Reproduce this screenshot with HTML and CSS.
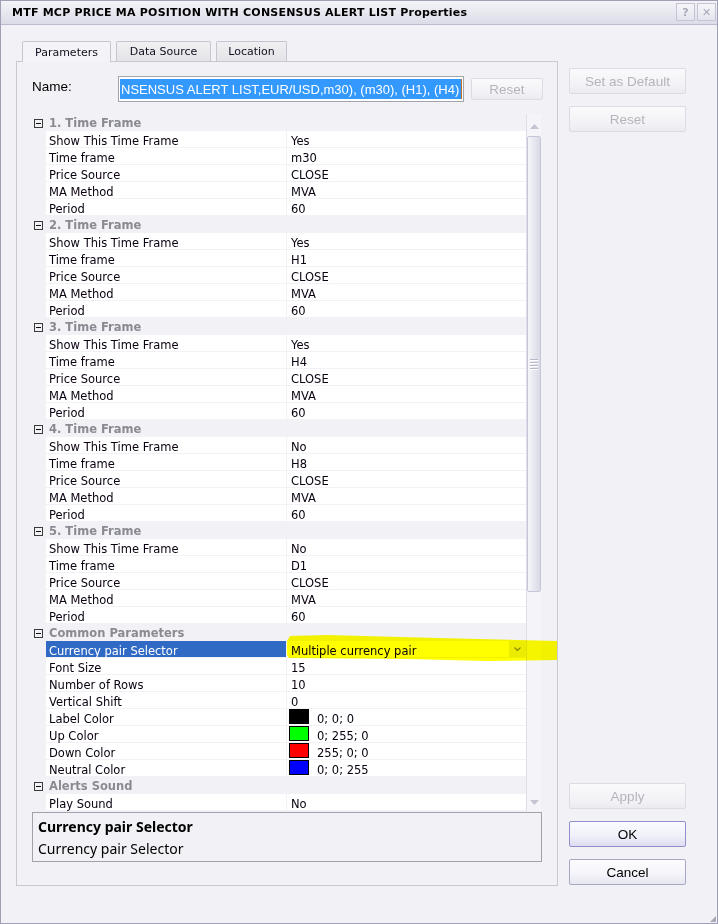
FILE: index.html
```html
<!DOCTYPE html>
<html>
<head>
<meta charset="utf-8">
<link rel="stylesheet" href="styles.css">
</head>
<body>
<div class="window">
  <div class="titlebar">
    <span class="title">MTF MCP PRICE MA POSITION WITH CONSENSUS ALERT LIST Properties</span>
    <div class="tb-buttons">
      <span class="tb-btn">?</span>
      <span class="tb-btn">✕</span>
    </div>
  </div>
  <div class="main">
    <div class="left">
      <div class="tabs">
        <div class="tab active t1">Parameters</div>
        <div class="tab t2">Data Source</div>
        <div class="tab t3">Location</div>
      </div>
      <div class="panel">
        <div class="name-row">
          <label class="name-label">Name:</label>
          <div class="name-input"><span class="sel">NSENSUS ALERT LIST,EUR/USD,m30), (m30), (H1), (H4)</span></div>
          <button class="btn disabled small">Reset</button>
        </div>
        <div class="grid">
          <div class="rows" id="rows"></div>
          <div class="scrollbar">
            <div class="sb-up"><svg width="9" height="5" viewBox="0 0 9 5"><path d="M0 5L4.5 0L9 5Z" fill="#c4c4d4"/></svg></div>
            <div class="sb-thumb"><div class="grip"><i></i><i></i><i></i><i></i></div></div>
            <div class="sb-track"></div>
            <div class="sb-down"><svg width="9" height="5" viewBox="0 0 9 5"><path d="M0 0L9 0L4.5 5Z" fill="#c4c4d4"/></svg></div>
          </div>
        </div>
        <div class="desc">
          <div class="desc-title">Currency pair Selector</div>
          <div class="desc-text">Currency pair Selector</div>
        </div>
      </div>
    </div>
    <div class="right">
      <div class="btn-group">
        <button class="btn disabled">Set as Default</button>
        <button class="btn disabled">Reset</button>
      </div>
      <div class="btn-group bottom">
        <button class="btn disabled">Apply</button>
        <button class="btn default">OK</button>
        <button class="btn">Cancel</button>
      </div>
    </div>
  </div>
  <div class="grip-corner"></div>
</div>
<script src="app.js"></script>
</body>
</html>
```

FILE: app.js
```js
(function () {
  var data = [];
  var tfs = [["Yes","m30"],["Yes","H1"],["Yes","H4"],["No","H8"],["No","D1"]];
  tfs.forEach(function (t, i) {
    data.push({cat: (i + 1) + ". Time Frame"});
    data.push({n: "Show This Time Frame", v: t[0]});
    data.push({n: "Time frame", v: t[1]});
    data.push({n: "Price Source", v: "CLOSE"});
    data.push({n: "MA Method", v: "MVA"});
    data.push({n: "Period", v: "60"});
  });
  data.push({cat: "Common Parameters"});
  data.push({n: "Currency pair Selector", v: "Multiple currency pair", sel: true});
  data.push({n: "Font Size", v: "15"});
  data.push({n: "Number of Rows", v: "10"});
  data.push({n: "Vertical Shift", v: "0"});
  data.push({n: "Label Color", v: "0; 0; 0", c: "#000000"});
  data.push({n: "Up Color", v: "0; 255; 0", c: "#00ff00"});
  data.push({n: "Down Color", v: "255; 0; 0", c: "#ff0000"});
  data.push({n: "Neutral Color", v: "0; 0; 255", c: "#0000ff"});
  data.push({cat: "Alerts Sound"});
  data.push({n: "Play Sound", v: "No"});

  var root = document.getElementById("rows");
  var html = "";
  data.forEach(function (r) {
    if (r.cat) {
      html += '<div class="row cat"><span class="gutter"><svg width="9" height="9" viewBox="0 0 9 9"><rect x=".5" y=".5" width="8" height="8" fill="none" stroke="#3a3a3a"/><path d="M2 4.5h5" stroke="#111"/></svg></span><span class="cat-name">' + r.cat + '</span></div>';
    } else {
      var val = '<span class="vtext">' + r.v + '</span>';
      if (r.c) {
        val = '<span class="swatch" style="background:' + r.c + '"></span><span class="ctext">' + r.v + '</span>';
      }
      if (r.sel) {
        val = '<span class="vtext">' + r.v + '</span><span class="dd"><svg width="7" height="4" viewBox="0 0 7 4"><path d="M.5 .5L3.5 3.5L6.5 .5" fill="none" stroke="#8a8a3a" stroke-width="1.2"/></svg></span>';
      }
      html += '<div class="row prop' + (r.sel ? ' selected' : '') + '"><span class="gutter"></span><span class="name"><span class="ntext">' + r.n + '</span></span><span class="value">' + val + '</span>' + (r.sel ? '<span class="marker"></span>' : '') + '</div>';
    }
  });
  root.innerHTML = html;
})();
```

FILE: styles.css
```css
* { box-sizing: border-box; }
html, body { margin: 0; padding: 0; }
body {
  width: 718px;
  height: 924px;
  overflow: hidden;
  background: #f0f0f6;
  font-family: "DejaVu Sans", Verdana, sans-serif;
}
.window {
  position: relative;
  width: 718px;
  height: 924px;
  border: 1px solid #9fa0b6;
  background: #f1f1f6;
  display: flex;
  flex-direction: column;
}
.titlebar {
  height: 24px;
  flex: none;
  display: flex;
  align-items: center;
  justify-content: space-between;
  padding: 0 1px 1px 11px;
  background: linear-gradient(#f3f3f8, #dcdce8);
  border-bottom: 1px solid #bcbcd0;
}
.title {
  font-family: "DejaVu Sans", Verdana, sans-serif;
  font-weight: bold;
  font-size: 11px;
  color: #000;
  letter-spacing: 0.22px;
}
.tb-buttons { display: flex; gap: 2px; }
.tb-btn {
  width: 19px;
  height: 18px;
  border: 1px solid #c4c4d2;
  background: linear-gradient(#f6f6fa, #e4e4ee);
  color: #a8a8b8;
  font-family: "DejaVu Sans", sans-serif;
  font-weight: bold;
  font-size: 11px;
  display: flex;
  align-items: center;
  justify-content: center;
}
.main {
  flex: 1;
  display: flex;
  padding: 16px 0 0 15px;
  gap: 11px;
}
.left { display: flex; flex-direction: column; width: 542px; }
.tabs { display: flex; padding-left: 6px; gap: 5px; height: 20px; position: relative; z-index: 2; }
.tab {
  height: 20px;
  border: 1px solid #c6c6d0;
  border-bottom: none;
  background: linear-gradient(#f0f0f2, #e4e4e8);
  font-size: 11px;
  color: #101020;
  display: flex;
  align-items: center;
  justify-content: center;
  border-radius: 2px 2px 0 0;
}
.tab.active { background: #f4f4f8; height: 21px; }
.t1 { width: 89px; }
.t2 { width: 95px; }
.t3 { width: 71px; }
.panel {
  height: 825px;
  border: 1px solid #c8c8d2;
  padding: 14px 0 0 15px;
  display: flex;
  flex-direction: column;
}
.name-row { display: flex; align-items: flex-start; height: 26px; }
.name-label {
  width: 86px;
  font-family: "Liberation Sans", Arial, sans-serif;
  font-size: 13.5px;
  padding-top: 3px;
  color: #000;
}
.name-input {
  width: 346px;
  height: 26px;
  border: 1px solid #a4a4ac;
  background: #fff;
  padding: 2px 1px;
  overflow: hidden;
}
.sel {
  display: block;
  height: 20px;
  background: #3399ff;
  color: #fff;
  font-family: "Liberation Sans", Arial, sans-serif;
  font-size: 13px;
  line-height: 21px;
  white-space: nowrap;
  padding-left: 1px;
  border-right: 1px solid #c87020;
}
.btn {
  width: 117px;
  height: 26px;
  border: 1px solid #a8a8c4;
  border-radius: 2px;
  background: linear-gradient(#fdfdff 0%, #f4f4fa 60%, #e6e6f0 100%);
  font-family: "Liberation Sans", Arial, sans-serif;
  font-size: 13.5px;
  color: #000;
  padding: 0;
}
.btn.disabled { color: #b4b4bc; border-color: #dcdce4; background: linear-gradient(#fafafc, #f2f2f6 70%, #eaeaf0); }
.btn.default { border-color: #9090cc; background: linear-gradient(#fafaff, #f0f0fa 60%, #dcdcf0); }
.btn.small { width: 72px; height: 22px; margin-left: 7px; margin-top: 2px; }
.grid {
  display: flex;
  margin-top: 12px;
  height: 697px;
}
.rows { width: 494px; display: flex; flex-direction: column; }
.row {
  position: relative;
  height: 17px;
  display: flex;
  flex: none;
  font-size: 11.5px;
  line-height: 16px;
  color: #0a0010;
  white-space: nowrap;
}
.gutter { width: 14px; flex: none; display: flex; align-items: center; padding-left: 2px; }
.row.cat .gutter svg { margin-top: 1px; }
.cat-name { font-weight: bold; color: #8a8a92; padding-left: 3px; line-height: 19px; }
.name { width: 240px; height: 16px; background: #fff; padding-left: 3px; flex: none; }
.ntext, .vtext, .ctext { display: block; padding-top: 2px; line-height: 16px; }
.value {
  width: 239px;
  height: 16px;
  background: #fff;
  margin-left: 1px;
  padding-left: 4px;
  flex: none;
  display: flex;
  align-items: flex-start;
}
.swatch { width: 20px; height: 15px; border: 1px solid #000; margin-left: -2px; flex: none; }
.ctext { padding-left: 8px; }
.selected .name { background: #316ac5; color: #fff; }
.vtext { flex: 1; }
.dd {
  width: 17px;
  height: 16px;
  background: #ececf0;
  display: flex;
  align-items: center;
  justify-content: center;
}
.marker {
  position: absolute;
  left: 255px;
  top: -6px;
  width: 270px;
  height: 27px;
  background: #ffff00;
  mix-blend-mode: multiply;
  clip-path: polygon(0 6px, 3px 1px, 40px 0, 150px 3px, 270px 6px, 270px 25px, 200px 26px, 120px 24px, 2px 23px, 0 20px);
  z-index: 5;
}
.scrollbar {
  width: 15px;
  display: flex;
  flex-direction: column;
  background: #f5f5f9;
  border-left: 1px solid #dedee8;
}
.sb-up { height: 22px; display: flex; align-items: center; justify-content: center; padding-top: 2px; }
.sb-down { height: 17px; display: flex; align-items: center; justify-content: center; }
.sb-thumb {
  height: 456px;
  border: 1px solid #c6c6da;
  border-radius: 2px;
  background: linear-gradient(90deg, #f6f6fa, #e4e4ee 60%, #dadae6);
  display: flex;
  align-items: center;
  justify-content: center;
}
.grip { display: flex; flex-direction: column; gap: 1px; }
.grip i { display: block; width: 8px; height: 1px; background: #b8b8ca; border-bottom: 1px solid #fff; box-sizing: content-box; }
.sb-track { flex: 1; }
.desc {
  width: 510px;
  height: 50px;
  margin-top: 1px;
  border: 1px solid #a2a2aa;
  padding: 4px 0 0 5px;
  font-family: "Noto Sans", "Open Sans", sans-serif;
  color: #000;
}
.desc-title { font-weight: bold; font-size: 14px; line-height: 19px; }
.desc-text { font-size: 14px; line-height: 22px; margin-top: 2px; }
.right {
  display: flex;
  flex-direction: column;
  justify-content: space-between;
  padding-top: 27px;
  padding-bottom: 38px;
}
.btn-group { display: flex; flex-direction: column; gap: 12px; }
.grip-corner {
  position: absolute;
  right: 1px;
  bottom: 1px;
  width: 6px;
  height: 6px;
  background: radial-gradient(circle, #a8a8b8 0.8px, transparent 1px) 0 0 / 2px 2px;
  clip-path: polygon(100% 0, 100% 100%, 0 100%);
}
```
